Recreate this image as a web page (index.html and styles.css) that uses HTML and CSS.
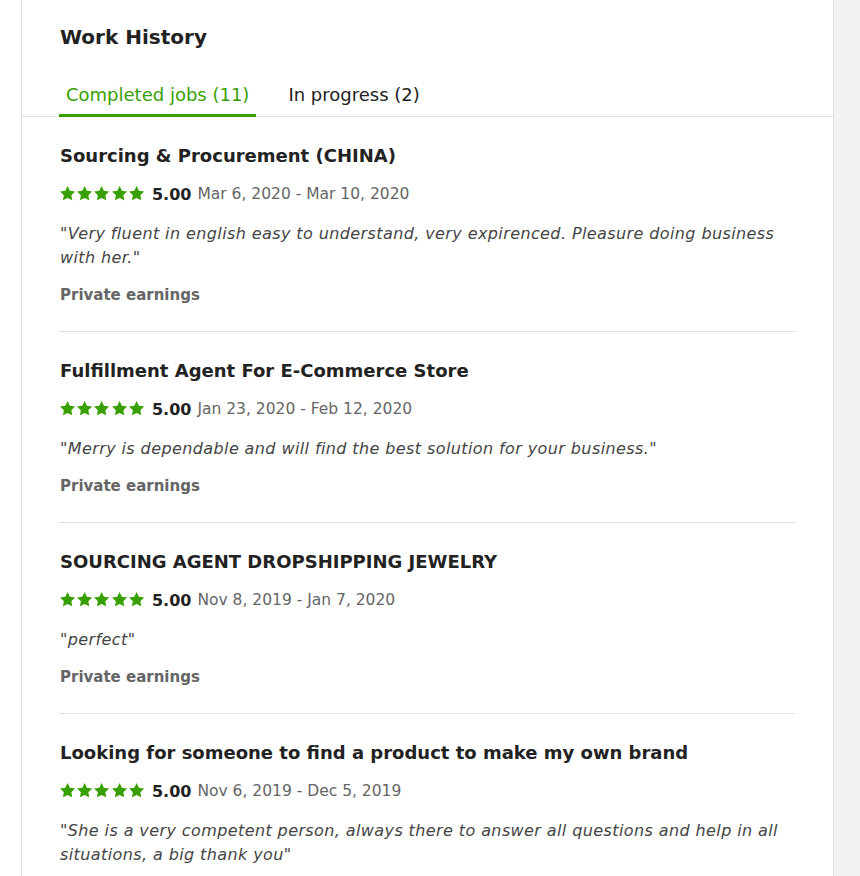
FILE: index.html
```html
<!DOCTYPE html>
<html>
<head>
<meta charset="utf-8">
<link rel="stylesheet" href="styles.css">
</head>
<body>
<div class="page">
  <div class="card">
    <header class="header">
      <h2 class="title">Work History</h2>
      <nav class="tabs">
        <span class="tab active">Completed jobs (11)</span>
        <span class="tab">In progress (2)</span>
      </nav>
    </header>
    <div class="jobs">
      <div class="job">
        <h3 class="job-title">Sourcing &amp; Procurement (CHINA)</h3>
        <div class="rating">
          <span class="stars">
            <svg viewBox="0 0 24 24"><path d="M12 1.5l3.2 6.6 7.3 1-5.3 5.1 1.3 7.2L12 18l-6.5 3.4 1.3-7.2L1.5 9.1l7.3-1z"/></svg><svg viewBox="0 0 24 24"><path d="M12 1.5l3.2 6.6 7.3 1-5.3 5.1 1.3 7.2L12 18l-6.5 3.4 1.3-7.2L1.5 9.1l7.3-1z"/></svg><svg viewBox="0 0 24 24"><path d="M12 1.5l3.2 6.6 7.3 1-5.3 5.1 1.3 7.2L12 18l-6.5 3.4 1.3-7.2L1.5 9.1l7.3-1z"/></svg><svg viewBox="0 0 24 24"><path d="M12 1.5l3.2 6.6 7.3 1-5.3 5.1 1.3 7.2L12 18l-6.5 3.4 1.3-7.2L1.5 9.1l7.3-1z"/></svg><svg viewBox="0 0 24 24"><path d="M12 1.5l3.2 6.6 7.3 1-5.3 5.1 1.3 7.2L12 18l-6.5 3.4 1.3-7.2L1.5 9.1l7.3-1z"/></svg>
          </span>
          <strong class="score">5.00</strong>
          <span class="dates">Mar 6, 2020 - Mar 10, 2020</span>
        </div>
        <p class="comment">"Very fluent in english easy to understand, very expirenced. Pleasure doing business with her."</p>
        <div class="earnings">Private earnings</div>
      </div>
      <div class="job">
        <h3 class="job-title">Fulfillment Agent For E-Commerce Store</h3>
        <div class="rating">
          <span class="stars">
            <svg viewBox="0 0 24 24"><path d="M12 1.5l3.2 6.6 7.3 1-5.3 5.1 1.3 7.2L12 18l-6.5 3.4 1.3-7.2L1.5 9.1l7.3-1z"/></svg><svg viewBox="0 0 24 24"><path d="M12 1.5l3.2 6.6 7.3 1-5.3 5.1 1.3 7.2L12 18l-6.5 3.4 1.3-7.2L1.5 9.1l7.3-1z"/></svg><svg viewBox="0 0 24 24"><path d="M12 1.5l3.2 6.6 7.3 1-5.3 5.1 1.3 7.2L12 18l-6.5 3.4 1.3-7.2L1.5 9.1l7.3-1z"/></svg><svg viewBox="0 0 24 24"><path d="M12 1.5l3.2 6.6 7.3 1-5.3 5.1 1.3 7.2L12 18l-6.5 3.4 1.3-7.2L1.5 9.1l7.3-1z"/></svg><svg viewBox="0 0 24 24"><path d="M12 1.5l3.2 6.6 7.3 1-5.3 5.1 1.3 7.2L12 18l-6.5 3.4 1.3-7.2L1.5 9.1l7.3-1z"/></svg>
          </span>
          <strong class="score">5.00</strong>
          <span class="dates">Jan 23, 2020 - Feb 12, 2020</span>
        </div>
        <p class="comment">"Merry is dependable and will find the best solution for your business."</p>
        <div class="earnings">Private earnings</div>
      </div>
      <div class="job">
        <h3 class="job-title">SOURCING AGENT DROPSHIPPING JEWELRY</h3>
        <div class="rating">
          <span class="stars">
            <svg viewBox="0 0 24 24"><path d="M12 1.5l3.2 6.6 7.3 1-5.3 5.1 1.3 7.2L12 18l-6.5 3.4 1.3-7.2L1.5 9.1l7.3-1z"/></svg><svg viewBox="0 0 24 24"><path d="M12 1.5l3.2 6.6 7.3 1-5.3 5.1 1.3 7.2L12 18l-6.5 3.4 1.3-7.2L1.5 9.1l7.3-1z"/></svg><svg viewBox="0 0 24 24"><path d="M12 1.5l3.2 6.6 7.3 1-5.3 5.1 1.3 7.2L12 18l-6.5 3.4 1.3-7.2L1.5 9.1l7.3-1z"/></svg><svg viewBox="0 0 24 24"><path d="M12 1.5l3.2 6.6 7.3 1-5.3 5.1 1.3 7.2L12 18l-6.5 3.4 1.3-7.2L1.5 9.1l7.3-1z"/></svg><svg viewBox="0 0 24 24"><path d="M12 1.5l3.2 6.6 7.3 1-5.3 5.1 1.3 7.2L12 18l-6.5 3.4 1.3-7.2L1.5 9.1l7.3-1z"/></svg>
          </span>
          <strong class="score">5.00</strong>
          <span class="dates">Nov 8, 2019 - Jan 7, 2020</span>
        </div>
        <p class="comment">"perfect"</p>
        <div class="earnings">Private earnings</div>
      </div>
      <div class="job">
        <h3 class="job-title">Looking for someone to find a product to make my own brand</h3>
        <div class="rating">
          <span class="stars">
            <svg viewBox="0 0 24 24"><path d="M12 1.5l3.2 6.6 7.3 1-5.3 5.1 1.3 7.2L12 18l-6.5 3.4 1.3-7.2L1.5 9.1l7.3-1z"/></svg><svg viewBox="0 0 24 24"><path d="M12 1.5l3.2 6.6 7.3 1-5.3 5.1 1.3 7.2L12 18l-6.5 3.4 1.3-7.2L1.5 9.1l7.3-1z"/></svg><svg viewBox="0 0 24 24"><path d="M12 1.5l3.2 6.6 7.3 1-5.3 5.1 1.3 7.2L12 18l-6.5 3.4 1.3-7.2L1.5 9.1l7.3-1z"/></svg><svg viewBox="0 0 24 24"><path d="M12 1.5l3.2 6.6 7.3 1-5.3 5.1 1.3 7.2L12 18l-6.5 3.4 1.3-7.2L1.5 9.1l7.3-1z"/></svg><svg viewBox="0 0 24 24"><path d="M12 1.5l3.2 6.6 7.3 1-5.3 5.1 1.3 7.2L12 18l-6.5 3.4 1.3-7.2L1.5 9.1l7.3-1z"/></svg>
          </span>
          <strong class="score">5.00</strong>
          <span class="dates">Nov 6, 2019 - Dec 5, 2019</span>
        </div>
        <p class="comment">"She is a very competent person, always there to answer all questions and help in all situations, a big thank you"</p>
        <div class="earnings">Private earnings</div>
      </div>
    </div>
  </div>
  <div class="side"></div>
</div>
</body>
</html>
```

FILE: styles.css
```css
* { box-sizing: border-box; }
html, body { margin: 0; padding: 0; background: #fff; }
body {
  font-family: "DejaVu Sans", "Open Sans", sans-serif;
  color: #222;
  overflow: hidden;
}
.page {
  display: flex;
  height: 876px;
  overflow: hidden;
  padding-left: 21px;
}
.card {
  width: 813px;
  flex: none;
  background: #fff;
  border-left: 1px solid #e0e0e0;
  border-right: 1px solid #e0e0e0;
}
.side {
  flex: 1;
  background: #f1f2f4;
}
.header {
  padding: 22px 0 0 0;
  border-bottom: 1px solid #e0e0e0;
}
.title {
  margin: 0 0 0 38px;
  font-size: 20px;
  line-height: 30px;
  font-weight: 700;
  color: #222;
}
.tabs {
  display: flex;
  gap: 25px;
  margin: 31px 0 0 37px;
}
.tab {
  padding: 0 7px 7px;
  font-size: 18px;
  line-height: 24px;
  color: #222;
  border-bottom: 3px solid transparent;
  margin-bottom: -1px;
}
.tab.active {
  color: #37a000;
  border-bottom-color: #37a000;
}
.jobs {
  padding: 0 38px 0 37px;
}
.job {
  padding: 26px 0 25px 1px;
  border-bottom: 1px solid #e0e0e0;
}
.job-title {
  margin: 0;
  font-size: 18px;
  line-height: 26px;
  font-weight: 700;
  color: #222;
}
.rating {
  display: flex;
  align-items: center;
  margin-top: 14px;
  height: 22px;
  font-size: 16px;
}
.stars {
  display: flex;
  margin-left: -1px;
  margin-right: 7px;
}
.stars svg {
  width: 17.2px;
  height: 17.2px;
  fill: #37a000;
  display: block;
}
.score {
  font-weight: 700;
  color: #222;
  margin-right: 6px;
}
.dates {
  color: #656565;
  font-size: 15.5px;
}
.comment {
  margin: 17px 0 0 0;
  font-size: 16px;
  line-height: 24px;
  font-style: italic;
  letter-spacing: 0.4px;
  color: #444;
}
.earnings {
  margin-top: 14px;
  font-size: 15px;
  line-height: 22px;
  font-weight: 700;
  color: #656565;
}
```
